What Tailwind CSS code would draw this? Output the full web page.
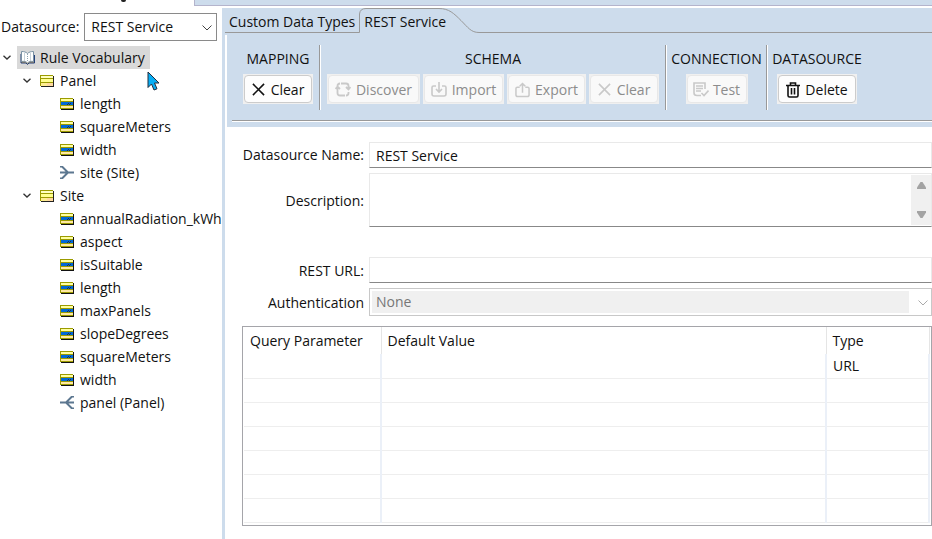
<!DOCTYPE html>
<html lang="en">
<head>
<meta charset="utf-8">
<title>Rule Vocabulary</title>
<script src="https://cdn.jsdelivr.net/npm/@tailwindcss/browser@4"></script>
</head>
<body class="relative flex min-h-screen flex-col overflow-x-hidden bg-white font-['Open_Sans','Noto_Sans',sans-serif] text-[14px] leading-5 text-[#111]">
<svg class="hidden">
  <symbol id="entity" viewBox="0 0 14 12"><path d="M1 1h13v11H1z" fill="#222"/><path d="M0 0h13v11H0z" fill="#9b9b00"/><path d="M1 1h12v2H1z" fill="#ffffc0"/><path d="M1 4h12v3H1z" fill="#ffff90"/><path d="M1 8h12v3H1z" fill="#ffee90"/><path d="M7 8h6v3H7z" fill="#ffd9a0"/></symbol>
  <symbol id="attr" viewBox="0 0 14 12"><path d="M1 1h13v11H1z" fill="#111"/><path d="M0 0h13v11H0z" fill="#9b9b00"/><path d="M1 1h12v2H1z" fill="#ffffa0"/><path d="M1 4h12v3H1z" fill="#0068d8"/><path d="M8 5h1v1H8zM10 5h1v1h-1zM7 6h1v1H7zM9 6h1v1H9z" fill="#234"/><path d="M1 8h12v2H1z" fill="#ffe9a0"/></symbol>
  <symbol id="assoc" viewBox="0 0 14 13"><path d="M0 .5h2l6 6-6 6H0M0 6.500h14" fill="none" stroke="#5c7790" stroke-width="2"/></symbol>
  <symbol id="down" viewBox="0 0 8 5"><path d="M.5.7 4 4 7.500.7" fill="none" stroke="#333" stroke-width="1.300"/></symbol>
  <symbol id="cross" viewBox="0 0 14 14"><path d="m1 1 12 12M13 1 1 13" fill="none" stroke="currentColor" stroke-width="1.700"/></symbol>
</svg>

<header class="flex h-[8px] shrink-0">
  <div class="relative w-[194px] shrink-0"><span class="absolute left-[121px] top-0 h-[2px] w-[5px] rounded-b bg-[#222]"></span></div>
  <div class="h-[6px] grow border-b border-l border-[#b4b4cc] bg-[#cddcec]"></div>
</header>

<div class="flex grow">
  <aside class="w-[222px] shrink-0 overflow-hidden pt-[5px]">
    <div class="flex items-center gap-[5px] pl-px">
      <label for="ds">Datasource:</label>
      <div class="relative w-[133px] shrink-0">
        <select id="ds" class="block h-[28px] w-full appearance-none border border-[#8a8a8a] bg-white px-[6px]"><option>REST Service</option></select>
        <svg class="pointer-events-none absolute right-[5px] top-[12px] h-[6px] w-[10px]" viewBox="0 0 10 6"><path d="m.5.5 4.500 4.500L9.500.5" fill="none" stroke="#444"/></svg>
      </div>
    </div>
    <ul class="mt-[5px] whitespace-nowrap">
      <li>
        <div class="flex h-[23px] items-center gap-[6px] pl-[3px]"><svg class="h-[5px] w-[8px]"><use href="#down"/></svg>
          <span class="flex h-[23px] items-center gap-[5px] bg-[#d9d9d9] pl-[3px] pr-[5px]">
            <svg class="h-[14px] w-[15px]" viewBox="0 0 15 14"><path d="M1 3v9h5l1.500 1.500L9 12h5.500V4" fill="#c2a46a" stroke="#223f78"/><path d="M1.500.5C4 .5 6 1 7.500 2.500 9 1 11 .5 13.500.5v10c-2.500-.5-4.500 0-6 1.500-1.500-1.500-3.500-2-6-1.500z" fill="#fff" stroke="#7a92a4"/><path d="M7.500 3v8M4.500 2.500v7M10.500 2.500v7" stroke="#8fa3b0" stroke-dasharray="1 1"/></svg>Rule Vocabulary</span>
        </div>
        <ul>
          <li>
            <div class="flex h-[23px] items-center gap-[6px] pl-[23px]"><svg class="mr-[3px] h-[5px] w-[8px]"><use href="#down"/></svg><svg class="h-[12px] w-[14px]"><use href="#entity"/></svg>Panel</div>
            <ul>
              <li class="flex h-[23px] items-center gap-[6px] pl-[60px]"><svg class="h-[12px] w-[14px]"><use href="#attr"/></svg>length</li>
              <li class="flex h-[23px] items-center gap-[6px] pl-[60px]"><svg class="h-[12px] w-[14px]"><use href="#attr"/></svg>squareMeters</li>
              <li class="flex h-[23px] items-center gap-[6px] pl-[60px]"><svg class="h-[12px] w-[14px]"><use href="#attr"/></svg>width</li>
              <li class="flex h-[23px] items-center gap-[6px] pl-[60px]"><svg class="h-[13px] w-[14px]"><use href="#assoc"/></svg>site (Site)</li>
            </ul>
          </li>
          <li>
            <div class="flex h-[23px] items-center gap-[6px] pl-[23px]"><svg class="mr-[3px] h-[5px] w-[8px]"><use href="#down"/></svg><svg class="h-[12px] w-[14px]"><use href="#entity"/></svg>Site</div>
            <ul>
              <li class="flex h-[23px] items-center gap-[6px] pl-[60px]"><svg class="h-[12px] w-[14px] shrink-0"><use href="#attr"/></svg>annualRadiation_kWh</li>
              <li class="flex h-[23px] items-center gap-[6px] pl-[60px]"><svg class="h-[12px] w-[14px]"><use href="#attr"/></svg>aspect</li>
              <li class="flex h-[23px] items-center gap-[6px] pl-[60px]"><svg class="h-[12px] w-[14px]"><use href="#attr"/></svg>isSuitable</li>
              <li class="flex h-[23px] items-center gap-[6px] pl-[60px]"><svg class="h-[12px] w-[14px]"><use href="#attr"/></svg>length</li>
              <li class="flex h-[23px] items-center gap-[6px] pl-[60px]"><svg class="h-[12px] w-[14px]"><use href="#attr"/></svg>maxPanels</li>
              <li class="flex h-[23px] items-center gap-[6px] pl-[60px]"><svg class="h-[12px] w-[14px]"><use href="#attr"/></svg>slopeDegrees</li>
              <li class="flex h-[23px] items-center gap-[6px] pl-[60px]"><svg class="h-[12px] w-[14px]"><use href="#attr"/></svg>squareMeters</li>
              <li class="flex h-[23px] items-center gap-[6px] pl-[60px]"><svg class="h-[12px] w-[14px]"><use href="#attr"/></svg>width</li>
              <li class="flex h-[23px] items-center gap-[6px] pl-[60px]"><svg class="h-[13px] w-[14px] -scale-x-100"><use href="#assoc"/></svg>panel (Panel)</li>
            </ul>
          </li>
        </ul>
      </li>
    </ul>
  </aside>

  <main class="min-w-0 grow border-l-[3px] border-[#cddcec]">
    <div class="flex h-[27px] bg-[#cddcec] pb-[2px]" role="tablist">
      <button role="tab" class="h-[25px] shrink-0 border-b border-[#999] px-[4px] pt-[3px]">Custom Data Types</button>
      <button role="tab" aria-selected="true" class="relative h-[25px] w-[120px] shrink-0 pl-[5px] pt-[2px] text-left">
        <svg class="absolute left-0 top-0 h-[25px] w-[120px]" viewBox="0 0 120 25"><path d="M0 24.500h.5V6Q1 .5 7 .5h73c10 0 15 5 22 12s10 12 18 12" fill="none" stroke="#999"/></svg><span class="relative">REST Service</span>
      </button>
      <div class="h-[25px] grow border-b border-[#999]"></div>
    </div>

    <div class="ml-[2px] h-[92px] bg-[#cddcec] pl-[5px] pt-[10px]">
      <div class="flex h-[65px] whitespace-nowrap">
        <section class="flex flex-col items-center gap-[5px] pl-[11px] pr-[6px] pt-[4px]">
          <h2>MAPPING</h2>
          <div class="bg-[#f0f0f0] p-px"><button class="flex h-[28px] w-[68px] items-center justify-center gap-[6px] rounded border border-[#ccc] bg-[#fdfdfd] pt-px"><svg class="h-[13px] w-[13px]"><use href="#cross"/></svg>Clear</button></div>
        </section>
        <div class="w-[2px] border-l border-r border-l-[#999] border-r-white"></div>
        <section class="flex flex-col items-center gap-[5px] px-[6px] pt-[4px]">
          <h2>SCHEMA</h2>
          <div class="flex gap-[3px] text-[#8c8c8c]">
            <div class="bg-[#f0f0f0] p-px"><button disabled class="flex h-[28px] w-[91px] items-center justify-center gap-[5px] rounded border border-[#e8e8e8] bg-[#f9f9f9] pt-px"><svg class="h-[15px] w-[16px]" viewBox="0 0 16 15"><path d="M6 1.500h5q2.500 0 2.500 2.500v2.500M10 13.500H5Q2.500 13.500 2.500 11V5M.5 7l2-2.500L5 7M11 5l2.500 2.500L15.500 5M13.500 10v1q0 2.500-2.500 2.500M2.500 4q0-2.500 2.500-2.500" fill="none" stroke="#c9c9c9" stroke-width="1.800"/></svg>Discover</button></div>
            <div class="bg-[#f0f0f0] p-px"><button disabled class="flex h-[28px] w-[79px] items-center justify-center gap-[5px] rounded border border-[#e8e8e8] bg-[#f9f9f9] pt-px"><svg class="h-[15px] w-[16px]" viewBox="0 0 16 15"><path d="M5 4H2.500Q1 4 1 5.500V12q0 2 2 2h10q2 0 2-2V5.500Q15 4 13.500 4H11M8 0v10M5 7l3 3 3-3" fill="none" stroke="#c9c9c9" stroke-width="1.600"/></svg>Import</button></div>
            <div class="bg-[#f0f0f0] p-px"><button disabled class="flex h-[28px] w-[77px] items-center justify-center gap-[5px] rounded border border-[#e8e8e8] bg-[#f9f9f9] pt-px"><svg class="h-[16px] w-[15px]" viewBox="0 0 16 16"><path d="M5 5H2.500Q1 5 1 6.500V13q0 2 2 2h10q2 0 2-2V6.500Q15 5 13.500 5H11M8 1v10M5 4l3-3 3 3" fill="none" stroke="#c9c9c9" stroke-width="1.600"/></svg>Export</button></div>
            <div class="bg-[#f0f0f0] p-px"><button disabled class="flex h-[28px] w-[68px] items-center justify-center gap-[6px] rounded border border-[#e8e8e8] bg-[#f9f9f9] pt-px"><svg class="h-[13px] w-[13px] text-[#c9c9c9]"><use href="#cross"/></svg>Clear</button></div>
          </div>
        </section>
        <div class="w-[2px] border-l border-r border-l-[#999] border-r-white"></div>
        <section class="flex w-[99px] flex-col items-center gap-[5px] pt-[4px]">
          <h2>CONNECTION</h2>
          <div class="bg-[#f0f0f0] p-px text-[#8c8c8c]"><button disabled class="flex h-[28px] w-[60px] items-center justify-center gap-[4px] rounded border border-[#e8e8e8] bg-[#f9f9f9] pt-px"><svg class="h-[15px] w-[16px]" viewBox="0 0 16 15"><path d="M12 7V1H1v10q0 2.500 3 2.500h4M3 4h7M3 6.500h7M3 9h5M8.500 11l2.500 2.500L15.500 8.500" fill="none" stroke="#c9c9c9" stroke-width="1.600"/></svg>Test</button></div>
        </section>
        <div class="w-[2px] border-l border-r border-l-[#999] border-r-white"></div>
        <section class="flex w-[98px] flex-col items-center gap-[5px] pt-[4px]">
          <h2>DATASOURCE</h2>
          <div class="bg-[#f0f0f0] p-px"><button class="flex h-[28px] w-[78px] items-center justify-center gap-[5px] rounded border border-[#ccc] bg-[#fdfdfd] pt-px"><svg class="h-[16px] w-[14px]" viewBox="0 0 14 16"><path d="M0 3.500h14M4.500 3V1h5v2M2 4v9.500Q2 15 3.500 15h7q1.500 0 1.500-1.500V4M5.500 6v6.500M8.500 6v6.500" fill="none" stroke="#111" stroke-width="1.600"/></svg>Delete</button></div>
        </section>
      </div>
      <div class="mt-[10px] h-[2px] border-b border-t border-b-white border-t-[#999]"></div>
    </div>

    <form class="mt-[15px] grid grid-cols-[139px_minmax(0,1fr)] items-center gap-x-[5px]">
      <label for="name" class="text-right">Datasource Name:</label>
      <input id="name" value="REST Service" class="h-[26px] w-full border border-[#e9e9e9] border-b-[#888] px-[6px] outline-none">
      <label for="desc" class="mt-[6px] text-right">Description:</label>
      <div class="mt-[5px] flex h-[54px] border border-[#e9e9e9] border-b-[#888] py-px pl-px">
        <textarea id="desc" class="h-full grow resize-none overflow-hidden px-[5px] outline-none"></textarea>
        <div class="flex w-[20px] flex-col items-center justify-between bg-[#f0f0f0] py-[7px]">
          <svg class="h-[7px] w-[9px]" viewBox="0 0 9 7"><path d="M3.500 0h2L9 5.500V7H0V5.500z" fill="#a3a3a3"/></svg>
          <svg class="h-[7px] w-[9px]" viewBox="0 0 9 7"><path d="M0 0h9v1.500L5.500 7h-2L0 1.500z" fill="#a3a3a3"/></svg>
        </div>
      </div>
      <label for="url" class="mt-[31px] text-right">REST URL:</label>
      <input id="url" class="mt-[30px] h-[26px] w-full border border-[#e9e9e9] border-b-[#888] px-[6px] outline-none">
      <label for="auth" class="mt-[6px] text-right">Authentication</label>
      <div class="relative mt-[5px] h-[28px] border border-[#c8c8c8] py-[2px] pl-[2px] pr-[22px]">
        <select id="auth" disabled class="block h-full w-full appearance-none bg-[#f0f0f0] px-[4px] text-[#777] opacity-100"><option>None</option></select>
        <svg class="pointer-events-none absolute right-[3px] top-[11px] h-[6px] w-[10px]" viewBox="0 0 10 6"><path d="m.5.5 4.500 4.500L9.500.5" fill="none" stroke="#aaa"/></svg>
      </div>
    </form>

    <div class="ml-[17px] mt-[10px] border border-[#a5a5aa] px-px pb-[2px]">
      <table class="w-full table-fixed border-collapse text-left">
        <colgroup><col class="w-[137px]"><col><col class="w-[103px]"></colgroup>
        <thead><tr class="h-[27px]"><th class="border-r border-[#e5e5e5] px-[6px] pb-0 pt-px font-normal">Query Parameter</th><th class="border-r border-[#e5e5e5] px-[6px] pb-0 pt-px font-normal">Default Value</th><th class="border-r border-[#e5e5e5] px-[6px] pb-0 pt-px font-normal">Type</th></tr></thead>
        <tbody class="[&_td]:border-b [&_td]:border-r-2 [&_td]:border-b-[#eee] [&_td]:border-r-[#ebf0f8] [&_td]:px-[6px] [&_td]:py-0">
          <tr class="h-[24px]"><td></td><td></td><td>URL</td></tr>
          <tr class="h-[24px]"><td></td><td></td><td></td></tr>
          <tr class="h-[24px]"><td></td><td></td><td></td></tr>
          <tr class="h-[24px]"><td></td><td></td><td></td></tr>
          <tr class="h-[24px]"><td></td><td></td><td></td></tr>
          <tr class="h-[24px]"><td></td><td></td><td></td></tr>
          <tr class="h-[24px]"><td></td><td></td><td></td></tr>
        </tbody>
      </table>
    </div>
  </main>
</div>
<svg class="pointer-events-none absolute left-[147px] top-[71px] h-[20px] w-[13px]" viewBox="0 0 13 20"><path d="M1 1v15.500l3.500-3.500 2.500 6 3-1.200L7.500 12H12z" fill="#08aef5" stroke="#222c3c"/></svg>
</body>
</html>
